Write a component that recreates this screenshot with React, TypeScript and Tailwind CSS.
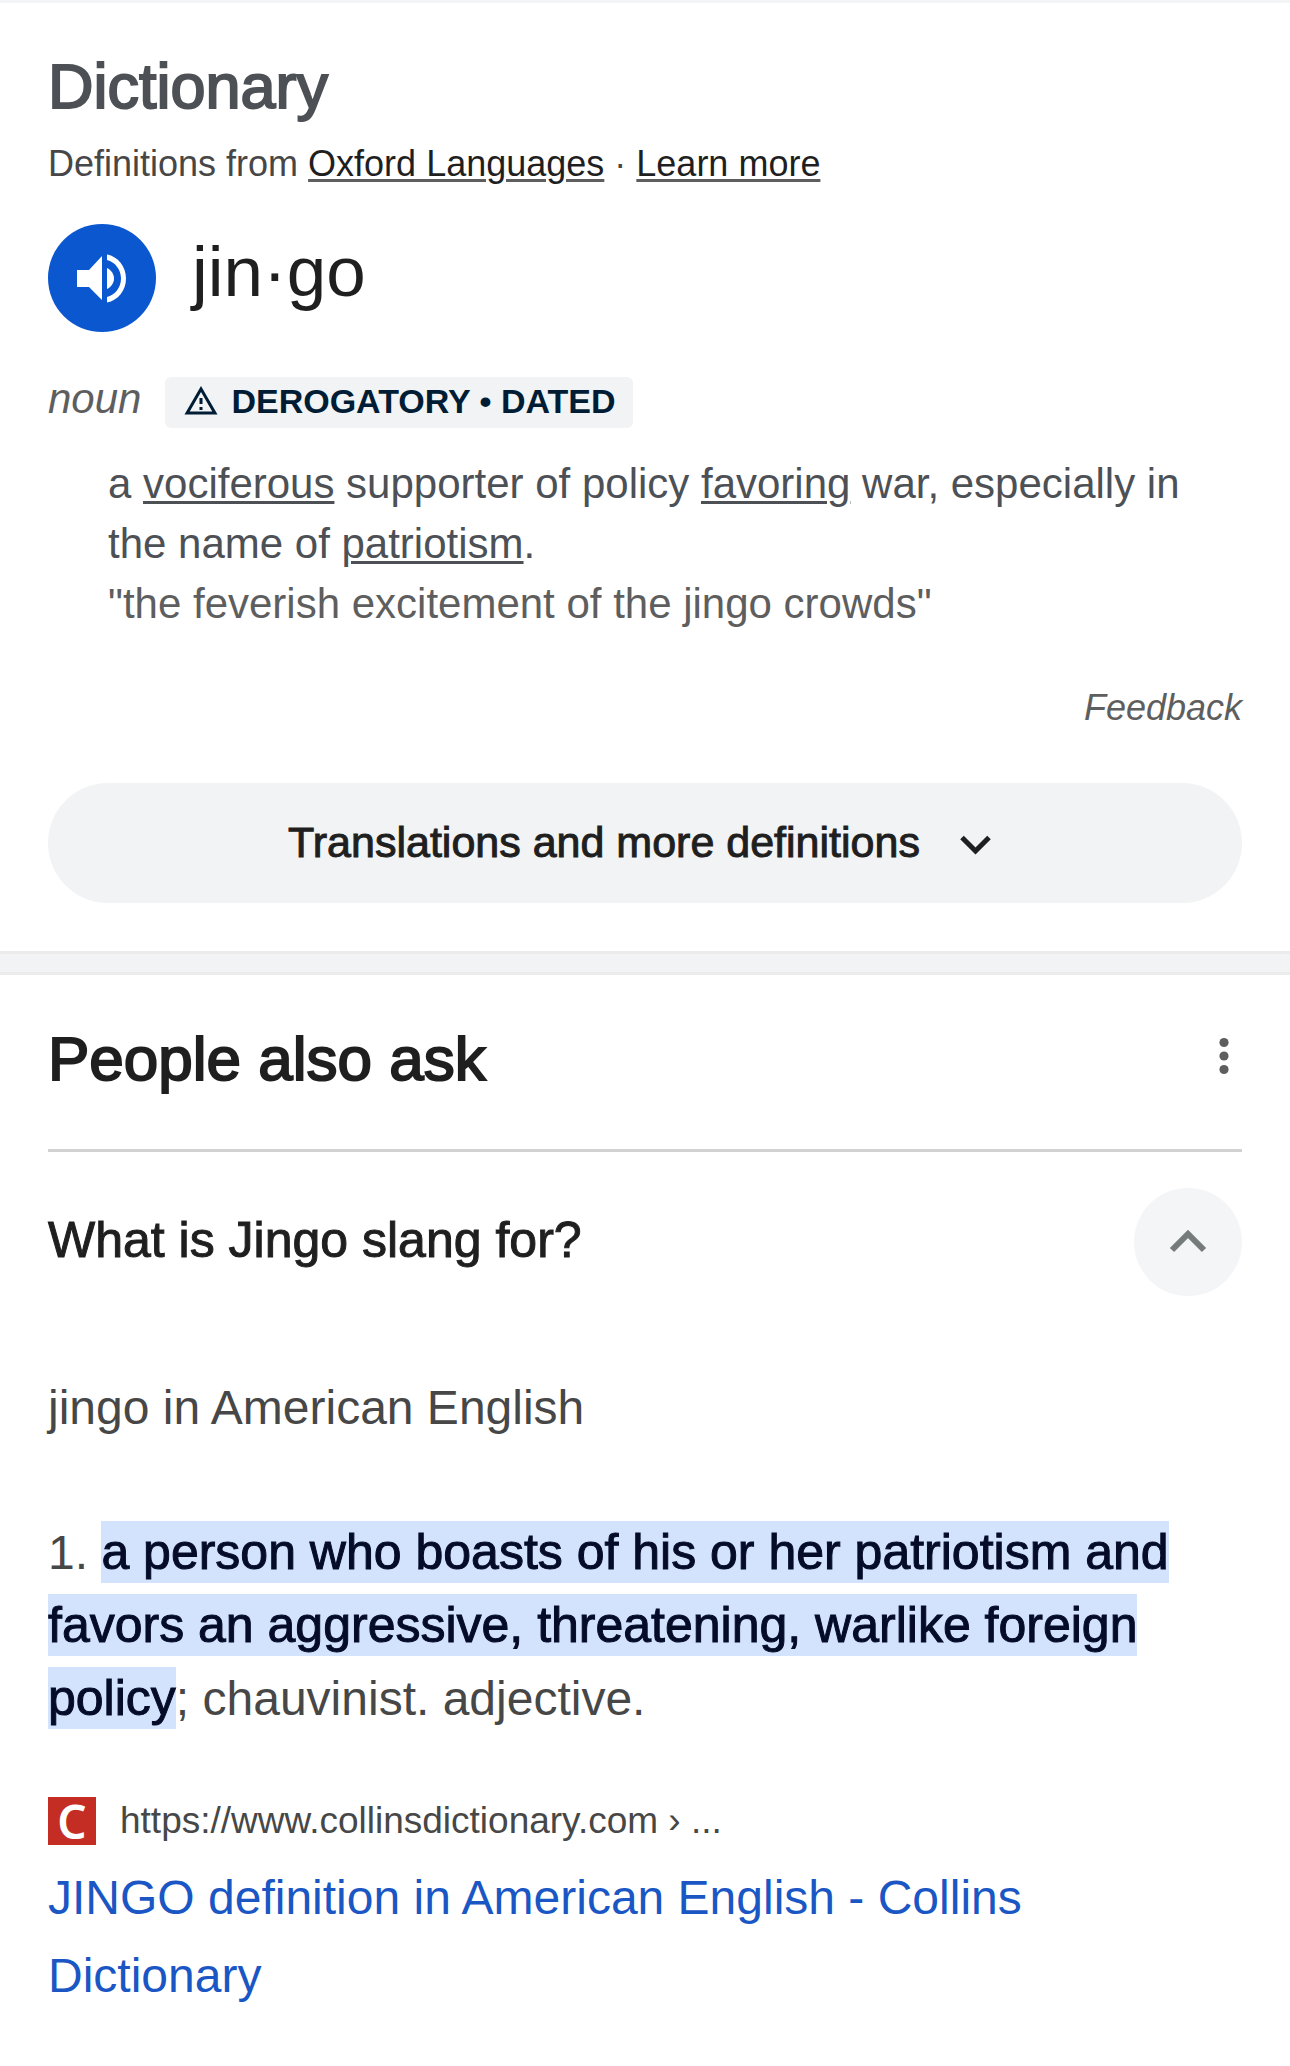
import { useState } from 'react'
import type { ReactNode } from 'react'

function Term({ children }: { children: ReactNode }) {
  return (
    <a href="#" className="underline decoration-3 underline-offset-3">
      {children}
    </a>
  )
}

function SourceLink({ children }: { children: ReactNode }) {
  return (
    <a href="#" className="text-[#1f1f1f] underline decoration-[#5e5e5e] decoration-3 underline-offset-3">
      {children}
    </a>
  )
}

function Dictionary() {
  return (
    <section className="px-12 pt-[51px] pb-12">
      <h2 className="text-[63px] leading-16 text-[#4d5156] [-webkit-text-stroke:2px]">Dictionary</h2>
      <p className="mt-[22px] text-[36px] leading-12 text-[#474747]">
        Definitions from <SourceLink>Oxford Languages</SourceLink> · <SourceLink>Learn more</SourceLink>
      </p>

      <div className="mt-9 flex items-center gap-9">
        <button
          type="button"
          aria-label="Listen"
          className="flex size-27 items-center justify-center rounded-full bg-[#0b57d0] text-white"
        >
          <svg viewBox="0 0 54 54" className="size-[54px]" fill="currentColor">
            <path d="M2 19v17h12l13 13V5L14 19z" />
            <path d="M32 17v21c4-2 7-6 7-10.500s-3-8.500-7-10.500z" />
            <path d="M32 3.500v5.500c8 2 14 9.500 14 18.500s-6 16.500-14 18.500v5.500c11-2 19-12 19-24s-8-22-19-24z" />
          </svg>
        </button>
        <span className="pb-3 text-[71px] leading-20 text-[#1f1f1f]">jin·go</span>
      </div>

      <div className="mt-[45px] flex items-start gap-6">
        <span className="text-[42px] leading-11 text-[#5e5e5e] italic">noun</span>
        <span className="flex h-[51px] items-center gap-3 rounded-md bg-[#f1f3f4] px-[18px] pb-1 text-[34px] leading-12 font-bold text-[#001d35]">
          <svg viewBox="0 0 24 24" className="size-9" fill="currentColor">
            <path d="M12 5.990 19.530 19H4.470L12 5.990M12 2 1 21h22L12 2zm1 14h-2v2h2v-2zm0-6h-2v4h2v-4z" />
          </svg>
          DEROGATORY • DATED
        </span>
      </div>

      <div className="mt-[26px] pl-15 text-[42px] leading-15 text-[#4d5156]">
        <p>
          a <Term>vociferous</Term> supporter of policy <Term>favoring</Term> war, especially in the name of{' '}
          <Term>patriotism</Term>.
        </p>
        <p className="text-[#5e5e5e]">"the feverish excitement of the jingo crowds"</p>
      </div>

      <div className="mt-[50px] flex justify-end">
        <a href="#" className="text-[36px] leading-12 text-[#5e5e5e] italic">Feedback</a>
      </div>

      <button
        type="button"
        className="mt-[51px] flex h-30 w-full items-center justify-center gap-7 rounded-full bg-[#f1f3f4] pb-px text-[43px] text-[#1f1f1f] [-webkit-text-stroke:1px]"
      >
        Translations and more definitions
        <svg viewBox="0 0 54 54" className="size-[54px]" fill="none" stroke="currentColor" strokeWidth="5">
          <path d="M14 21.500 27.500 35 41 21.500" />
        </svg>
      </button>
    </section>
  )
}

function PeopleAlsoAsk() {
  const [open, setOpen] = useState(true)

  return (
    <section className="px-12 pt-13 pb-16">
      <div className="flex items-start justify-between">
        <h2 className="text-[62px] leading-16 text-[#1f1f1f] [-webkit-text-stroke:2px]">People also ask</h2>
        <button type="button" aria-label="More options" className="text-[#5e5e5e]">
          <svg viewBox="0 0 36 56" className="h-14 w-9" fill="currentColor">
            <circle cx="18" cy="15.500" r="4.600" />
            <circle cx="18" cy="29" r="4.600" />
            <circle cx="18" cy="42.500" r="4.600" />
          </svg>
        </button>
      </div>

      <div className="mt-[58px] flex items-center justify-between border-t-3 border-[#d2d2d2] pt-9">
        <h3 className="pb-1 text-[50px] leading-15 text-[#1f1f1f] [-webkit-text-stroke:1px]">What is Jingo slang for?</h3>
        <button
          type="button"
          aria-label="Toggle answer"
          aria-expanded={open}
          onClick={() => setOpen(!open)}
          className="flex size-27 items-center justify-center rounded-full bg-[#f4f5f7] text-[#757a7a]"
        >
          <svg
            viewBox="0 0 54 54"
            className={open ? 'size-[54px]' : 'size-[54px] rotate-180'}
            fill="none"
            stroke="currentColor"
            strokeWidth="6"
          >
            <path d="M11 35 27 19l16 16" />
          </svg>
        </button>
      </div>

      {open && (
        <div className="mt-19 text-[48px] leading-18 text-[#474747]">
          <p>jingo in American English</p>
          <p className="mt-18">
            1.{' '}
            <mark className="bg-[#d3e3fd] py-[3px] text-[50px] text-[#040c28] [-webkit-text-stroke:1px]">
              a person who boasts of his or her patriotism and favors an aggressive, threatening, warlike foreign policy
            </mark>
            ; chauvinist. adjective.
          </p>
          <a href="#" className="mt-[62px] block pr-12">
            <span className="flex items-center gap-6 text-[37px] leading-12 text-[#474747]">
              <span className="flex size-12 items-center justify-center bg-[#c42d23] font-['Noto_Sans',sans-serif] text-[46px] font-semibold text-white">
                C
              </span>
              <span>https://www.collinsdictionary.com › ...</span>
            </span>
            <span className="mt-3.5 block leading-[78px] text-[#1a56c4]">
              JINGO definition in American English - Collins Dictionary
            </span>
          </a>
        </div>
      )}
    </section>
  )
}

export default function App() {
  return (
    <main className="min-h-screen border-t-3 border-[#f3f4f5] bg-white font-['Liberation_Sans',Arial,sans-serif]">
      <Dictionary />
      <div className="h-6 border-y-3 border-[#ebebeb] bg-[#f1f3f4]" />
      <PeopleAlsoAsk />
    </main>
  )
}
